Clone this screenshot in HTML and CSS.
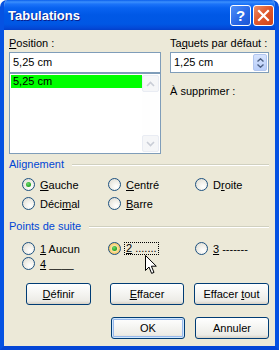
FILE: index.html
```html
<!DOCTYPE html>
<html lang="fr">
<head>
  <meta charset="UTF-8">
  <title>Tabulations</title>
  <link rel="stylesheet" href="styles.css">
</head>
<body>
<div class="window">
  <div class="titlebar">
    <span class="title">Tabulations</span>
    <span class="tb-btn help">?</span>
    <span class="tb-btn close">
      <svg width="13" height="13" viewBox="0 0 13 13"><path d="M2 2 L11 11 M11 2 L2 11" stroke="#fff" stroke-width="2.2" stroke-linecap="square"/></svg>
    </span>
  </div>

  <div class="content">
    <div class="top">
      <div class="col">
        <label class="lbl"><u>P</u>osition :</label>
        <div class="field">5,25 cm</div>
        <div class="listbox">
          <div class="items">
            <div class="item sel">5,25 cm</div>
          </div>
          <div class="vscroll">
            <span class="sbtn"><svg width="9" height="6" viewBox="0 0 9 6"><path d="M1 5 L4.5 1.5 L8 5" fill="none" stroke="#c9cdd6" stroke-width="1.6"/></svg></span>
            <span class="sbtn"><svg width="9" height="6" viewBox="0 0 9 6"><path d="M1 1 L4.5 4.5 L8 1" fill="none" stroke="#c9cdd6" stroke-width="1.6"/></svg></span>
          </div>
        </div>
      </div>
      <div class="col">
        <label class="lbl">Ta<u>q</u>uets par défaut :</label>
        <div class="field spin">
          <span>1,25 cm</span>
          <span class="spinbtn">
            <svg width="7" height="4" viewBox="0 0 7 4"><path d="M0.5 3.5 L3.5 0.8 L6.5 3.5" fill="none" stroke="#4d6185" stroke-width="1.4"/></svg>
            <svg width="7" height="4" viewBox="0 0 7 4"><path d="M0.5 0.5 L3.5 3.2 L6.5 0.5" fill="none" stroke="#4d6185" stroke-width="1.4"/></svg>
          </span>
        </div>
        <div class="lbl remove">À supprimer :</div>
      </div>
    </div>

    <div class="group-title">Alignement</div>
    <div class="radios align">
      <div class="opt"><span class="radio on"></span><span><u>G</u>auche</span></div>
      <div class="opt"><span class="radio"></span><span><u>C</u>entré</span></div>
      <div class="opt"><span class="radio"></span><span>D<u>r</u>oite</span></div>
      <div class="opt"><span class="radio"></span><span>Déci<u>m</u>al</span></div>
      <div class="opt"><span class="radio"></span><span><u>B</u>arre</span></div>
    </div>

    <div class="group-title leaders">Points de suite</div>
    <div class="radios lead">
      <div class="opt"><span class="radio"></span><span><u>1</u> Aucun</span></div>
      <div class="opt"><span class="radio on hot"></span><span class="focus"><u>2</u> .......</span></div>
      <div class="opt"><span class="radio"></span><span><u>3</u> -------</span></div>
      <div class="opt"><span class="radio"></span><span><u>4</u> ____</span></div>
    </div>

    <div class="btnrow first">
      <span class="btn w65"><u>D</u>éfinir</span>
      <span class="btn w74 gap20"><u>E</u>ffacer</span>
      <span class="btn w75">Effacer <u>t</u>out</span>
    </div>
    <div class="btnrow second">
      <span class="btn w74 default">OK</span>
      <span class="btn w74">Annuler</span>
    </div>
  </div>

  <svg class="cursor" width="13" height="20" viewBox="0 0 13 20">
    <path d="M0.5 0.5 L0.5 15.5 L4 12 L6.6 18.4 L9 17.4 L6.4 11.2 L11.3 11.2 Z" fill="#fff" stroke="#000" stroke-width="1" stroke-linejoin="miter"/>
  </svg>
</div>
</body>
</html>
```

FILE: styles.css
```css
* {
  margin: 0;
  padding: 0;
  box-sizing: border-box;
}

body {
  font-family: "Liberation Sans", Arial, sans-serif;
  font-size: 11px;
  color: #000;
  background: #fff;
}

.window {
  position: relative;
  width: 279px;
  height: 350px;
  background: #ece9d8;
  border-left: 4px solid #0552e2;
  border-right: 4px solid #0552e2;
  border-bottom: 4px solid #0446d6;
  display: flex;
  flex-direction: column;
  border-radius: 7px 7px 0 0;
  overflow: hidden;
}

.titlebar {
  height: 30px;
  margin: 0 -4px;
  display: flex;
  align-items: center;
  padding: 0 5px 0 8px;
  border-radius: 7px 7px 0 0;
  background: linear-gradient(#0a5eec 0, #3b8ffc 2px, #1c74f9 4px, #0862f0 8px, #0058e6 15px, #0057e4 24px, #0349d8 28px, #0340c9 30px);
}

.title {
  flex: 1;
  color: #fff;
  font-weight: bold;
  font-size: 13px;
  text-shadow: 1px 1px 0 #0a1e8c;
  padding-top: 1px;
}

.tb-btn {
  width: 21px;
  height: 21px;
  border: 1px solid #fff;
  border-radius: 3px;
  display: flex;
  align-items: center;
  justify-content: center;
  color: #fff;
  font-weight: bold;
  font-size: 15px;
}

.help {
  background: linear-gradient(135deg, #4f8ff7, #2766e6 60%, #1d55d3);
  margin-right: 2px;
}

.close {
  background: linear-gradient(135deg, #eb8f6a, #e05a2e 45%, #cf4218);
}

.content {
  flex: 1;
  padding: 7px 6px 0 5px;
}

.top {
  display: grid;
  grid-template-columns: 152px 99px;
  column-gap: 9px;
}

.lbl {
  display: block;
  height: 13px;
  line-height: 13px;
  margin-bottom: 2px;
}

.field {
  height: 21px;
  border: 1px solid #7f9db9;
  background: #fff;
  padding: 0 3px;
  line-height: 19px;
}

.spin {
  display: flex;
  align-items: center;
  justify-content: space-between;
  padding-right: 1px;
}

.spinbtn {
  width: 14px;
  height: 17px;
  border-radius: 2px;
  background: linear-gradient(#d6e3fd, #b9cefa);
  border: 1px solid #b2c6ef;
  display: flex;
  flex-direction: column;
  align-items: center;
  justify-content: center;
  gap: 2px;
}

.listbox {
  height: 81px;
  border: 1px solid #7f9db9;
  background: #fff;
  display: flex;
  padding: 1px;
}

.items {
  flex: 1;
}

.item {
  height: 13px;
  line-height: 13px;
  padding-left: 2px;
}

.sel {
  background: #00ff00;
}

.vscroll {
  width: 17px;
  display: flex;
  flex-direction: column;
  justify-content: space-between;
  background: #fefefe;
}

.sbtn {
  height: 17px;
  border: 1px solid #e9ecf3;
  border-radius: 2px;
  background: #f5f6f8;
  display: flex;
  align-items: center;
  justify-content: center;
}

.remove {
  margin-top: 12px;
}

.group-title {
  display: flex;
  align-items: center;
  color: #0046d5;
  height: 13px;
  line-height: 13px;
  margin-top: 4px;
}

.group-title::after {
  content: "";
  flex: 1;
  margin: 1px 0 0 8px;
  border-top: 1px solid #d0d0bf;
  border-bottom: 1px solid #fff;
}

.leaders {
  margin-top: 7px;
}

.radios {
  display: grid;
  grid-template-columns: 86px 87px auto;
  padding-left: 13px;
}

.align {
  margin-top: 4px;
  grid-auto-rows: 19px;
}

.lead {
  margin-top: 8px;
  grid-auto-rows: 15px;
}

.opt {
  display: flex;
  align-items: center;
  gap: 5px;
}

.radio {
  width: 13px;
  height: 13px;
  border-radius: 50%;
  border: 1px solid #1c5180;
  background: radial-gradient(circle at 65% 70%, #ffffff 0, #f4f3ee 35%, #dcd9ce 100%);
  position: relative;
}

.radio.on::after {
  content: "";
  position: absolute;
  left: 3px;
  top: 3px;
  width: 5px;
  height: 5px;
  border-radius: 50%;
  background: radial-gradient(circle at 40% 35%, #6fd86f, #21a121 70%);
}

.radio.hot {
  background: radial-gradient(circle, #fbf5e0 0, #fbe1a3 40%, #f4c054 75%, #e9a52d 100%);
}

.focus {
  outline: 1px dotted #000;
  padding: 0 1px;
  margin-left: -1px;
  line-height: 11px;
}

.btnrow {
  display: flex;
  gap: 10px;
}

.first {
  margin-top: 12px;
  padding-left: 17px;
}

.second {
  margin-top: 12px;
  justify-content: flex-end;
}

.btn {
  display: block;
  height: 22px;
  line-height: 20px;
  text-align: center;
  white-space: nowrap;
  border: 1px solid #003c74;
  border-radius: 3px;
  background: linear-gradient(#ffffff 0, #f6f6f3 40%, #ecebe6 85%, #d6d0c5 100%);
}

.w65 { width: 65px; }
.w74 { width: 74px; }
.w75 { width: 75px; }
.gap20 { margin-left: 9px; }

.default {
  box-shadow: inset 0 0 0 1px #cee7ff, inset 0 0 0 2px #98b8ea;
}

.cursor {
  position: absolute;
  left: 141px;
  top: 255px;
}
```
